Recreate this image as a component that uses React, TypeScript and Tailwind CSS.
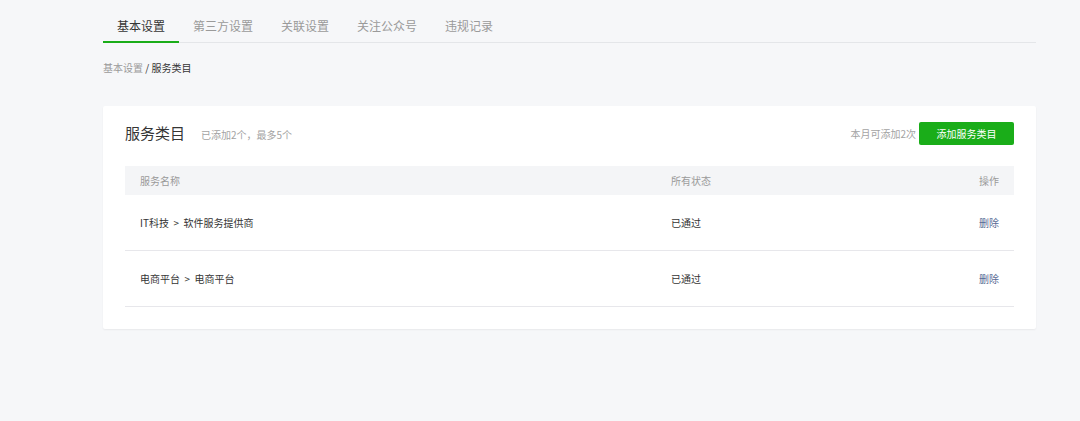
import React from "react";

const font = { fontFamily: '"Noto Sans CJK SC", "Noto Sans", sans-serif' };

export default function App() {
  const tabs = ["基本设置", "第三方设置", "关联设置", "关注公众号", "违规记录"];
  const rows = [
    { name: "IT科技  >  软件服务提供商", status: "已通过" },
    { name: "电商平台  >  电商平台", status: "已通过" },
  ];
  return (
    <div className="min-h-screen w-full bg-[#f6f7f9]" style={font}>
      <div className="ml-[103px] w-[933px]">
        <div className="flex h-[43px] items-end border-b border-[#e4e6e9]">
          {tabs.map((t, i) => (
            <div
              key={t}
              className={
                "flex h-[43px] items-center px-[14px] pt-[10px] text-[12px] leading-none " +
                (i === 0
                  ? "border-b-2 border-[#1aad19] text-[#353535] -mb-px"
                  : "text-[#9a9a9a]")
              }
            >
              {t}
            </div>
          ))}
        </div>
        <div className="mt-[20px] text-[10px] leading-none">
          <span className="text-[#9a9a9a]">基本设置</span>
          <span className="text-[#353535]"> / 服务类目</span>
        </div>
        <div className="mt-[33px] rounded-[2px] bg-white px-[22px] pb-[22px] pt-[16px] shadow-[0_1px_2px_rgba(0,0,0,0.06)]">
          <div className="flex h-[23px] items-center justify-between">
            <div className="flex items-center">
              <span className="text-[15px] text-[#353535]">服务类目</span>
              <span className="ml-[16px] mt-[2px] text-[10px] text-[#a3a3a3]">已添加2个，最多5个</span>
            </div>
            <div className="flex items-center">
              <span className="mr-[3px] text-[10px] text-[#a3a3a3]">本月可添加2次</span>
              <button className="flex h-[23px] w-[95px] items-center justify-center rounded-[2px] bg-[#1aad19] text-[10px] text-white">
                添加服务类目
              </button>
            </div>
          </div>
          <div className="mt-[21px]">
            <div className="grid h-[29px] grid-cols-[531px_1fr_auto] items-center bg-[#f4f5f7] px-[15px] text-[10px] text-[#9a9a9a]">
              <span>服务名称</span>
              <span>所有状态</span>
              <span>操作</span>
            </div>
            {rows.map((r) => (
              <div
                key={r.name}
                className="grid h-[56px] grid-cols-[531px_1fr_auto] items-center border-b border-[#e7e7eb] px-[15px] text-[10px] text-[#353535]"
              >
                <span className="whitespace-pre">{r.name}</span>
                <span>{r.status}</span>
                <span className="text-[#576b95]">删除</span>
              </div>
            ))}
          </div>
        </div>
      </div>
    </div>
  );
}
